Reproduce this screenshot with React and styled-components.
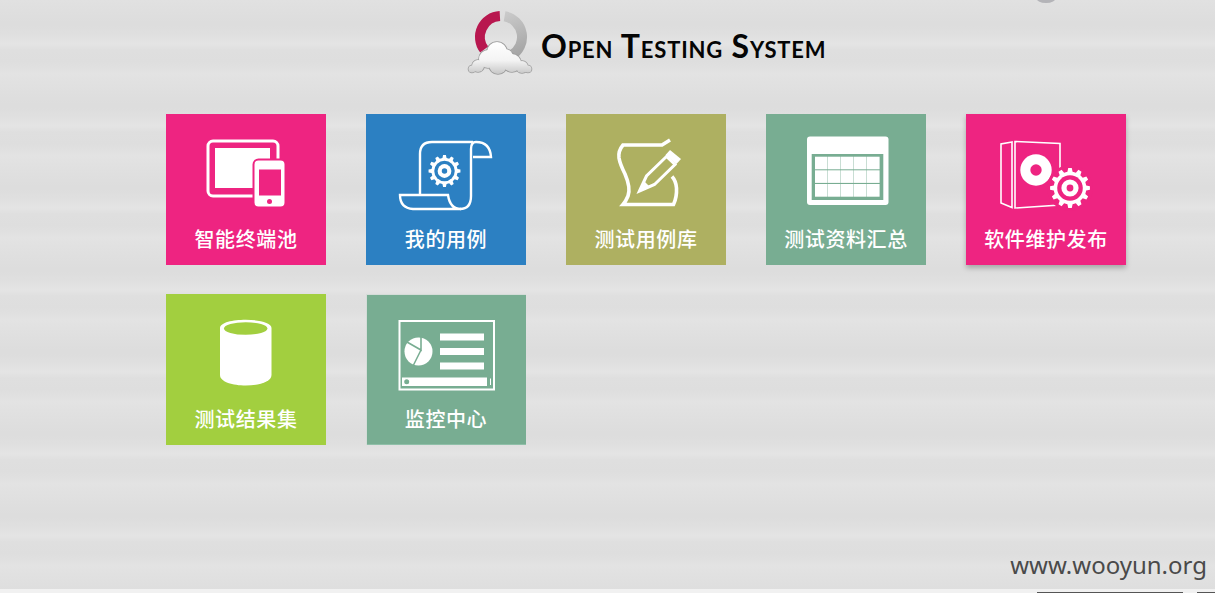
import React from 'react';
import styled, { createGlobalStyle } from 'styled-components';

const GlobalStyle = createGlobalStyle`
    html, body {
        margin: 0;
        padding: 0;
        height: 100%;
        overflow: hidden;
    }
`;

const Page = styled.div`
    position: relative;
    display: flex;
    flex-direction: column;
    height: 593px;
    overflow: hidden;
    font-family: "Noto Sans CJK SC", "Noto Sans", sans-serif;
    background-color: #dfdfdf;
    background-image: repeating-linear-gradient(
        to bottom,
        #e1e1e1 0px,
        #dddddd 22px,
        #dddddd 26px,
        #e0e0e0 36px,
        #e4e4e4 44px,
        #dfdfdf 50px,
        #dedede 62px,
        #e3e3e3 74px,
        #e1e1e1 82px
    );
`;

// the little grey thing peeking in at the top edge
const TopBlob = styled.div`
    position: absolute;
    top: -8px;
    left: 1036px;
    width: 20px;
    height: 11px;
    border-radius: 50%;
    background: #b4b4b8;
`;

const Header = styled.header`
    display: flex;
    align-items: flex-start;
    height: 114px;
    padding: 5px 0 0 466px;
    box-sizing: border-box;
`;

const LogoTitle = styled.h1`
    margin: 21px 0 0 5px;
    font-family: "Lato", "Liberation Sans", sans-serif;
    font-size: 32px;
    line-height: 40px;
    font-weight: 700;
    font-variant: small-caps;
    letter-spacing: 0.8px;
    white-space: nowrap;
    color: #050505;
`;

const Grid = styled.main`
    display: grid;
    grid-template-columns: repeat(5, 160px);
    grid-auto-rows: 151px;
    column-gap: 40px;
    row-gap: 29px;
    padding-left: 166px;
    flex: 1;
`;

const Tile = styled.a`
    display: flex;
    flex-direction: column;
    align-items: center;
    background: ${p => p.$color};
    box-shadow: ${p => p.$edge || 'none'};
    color: #fff;
    cursor: pointer;
`;

const IconBox = styled.svg`
    display: block;
    width: 160px;
    height: 110px;
    flex-shrink: 0;
`;

const Label = styled.span`
    font-size: 20px;
    line-height: 28px;
    margin-top: 1px;
    font-weight: 500;
    letter-spacing: 0.6px;
    white-space: nowrap;
`;

const Watermark = styled.div`
    align-self: flex-end;
    margin: 0 8px 6px 0;
    font-family: "Noto Sans", sans-serif;
    font-size: 24px;
    line-height: 30px;
    color: #4a4a4a;
`;

const BottomBar = styled.div`
    display: flex;
    justify-content: flex-end;
    align-items: flex-end;
    gap: 14px;
    height: 4px;
    margin-top: 3px;
    background: #f1f1f1;
`;

const BarPiece = styled.span`
    display: block;
    width: ${p => p.$width}px;
    height: 1px;
    background: #555;
`;

// builds a toothed outline for the gear icons
const gearPath = (cx, cy, outer, inner, teeth) => {
    const step = (Math.PI * 2) / teeth;
    const points = [];
    for (let i = 0; i < teeth; i++) {
        const a = i * step;
        const offsets = [[-0.3, inner], [-0.17, outer], [0.17, outer], [0.3, inner]];
        offsets.forEach(([o, r]) => {
            const angle = a + o * step;
            points.push(`${(cx + Math.cos(angle) * r).toFixed(2)} ${(cy + Math.sin(angle) * r).toFixed(2)}`);
        });
    }
    return `M${points.join('L')}Z`;
};

const Gear = ({ cx, cy, outer, bg, teeth = 12 }) => (
    <g>
        <path d={gearPath(cx, cy, outer, outer * 0.82, teeth)} fill="#fff" />
        <circle cx={cx} cy={cy} r={outer * 0.64} fill={bg} />
        <circle cx={cx} cy={cy} r={outer * 0.43} fill="#fff" />
        <circle cx={cx} cy={cy} r={outer * 0.17} fill={bg} />
    </g>
);

const DevicesIcon = ({ bg }) => (
    <IconBox viewBox="0 0 160 110">
        <rect x="42" y="27" width="70" height="55" rx="5" fill="none" stroke="#fff" strokeWidth="3" />
        <rect x="49" y="34" width="55" height="40" fill="#fff" />
        <rect x="87.5" y="45.5" width="32" height="48" rx="5" fill="#fff" stroke={bg} strokeWidth="2" />
        <rect x="93" y="55.5" width="22" height="26" fill={bg} />
        <circle cx="103.5" cy="87.5" r="2.5" fill={bg} />
    </IconBox>
);

const ScrollIcon = ({ bg }) => (
    <IconBox viewBox="0 0 160 110">
        <g fill="none" stroke="#fff" strokeWidth="2.4">
            <path d="M107 28H66Q54 28 54 40V81" />
            <path d="M34 81H82Q84 95 95 95H47Q34 94 34 81Z" />
            <path d="M94 95Q105 95 105 82V35Q105 28 110 28Q124 28 125 43H107" />
        </g>
        <Gear cx={78.5} cy={57} outer={16} bg={bg} />
    </IconBox>
);

const NoteIcon = () => (
    <IconBox viewBox="0 0 160 110">
        <path
            d="M104 26L96 31H57Q52 37 53 44Q54 50 59 60Q65 74 62 82Q60 87 57 90.5H107.5Q111 83 110.5 74Q110 67 106 62.5"
            fill="none"
            stroke="#fff"
            strokeWidth="3.6"
        />
        <path d="M73.5 77L80.5 62L100.5 42.5L109 50.5L88.5 70.5Z" fill="none" stroke="#fff" strokeWidth="3" strokeLinejoin="miter" />
        <path d="M73.5 77L78 67L83 72Z" fill="#fff" />
        <path d="M104 36L115 45L110.5 50L99.5 41Z" fill="#fff" />
    </IconBox>
);

const CalendarIcon = ({ bg }) => {
    const cols = [49, 62, 75, 88, 101];
    const rows = [[42.7, 12.6], [56.3, 12.6], [70, 12.7]];
    return (
        <IconBox viewBox="0 0 160 110">
            <rect x="41" y="22.5" width="81.5" height="68.5" rx="3" fill="#fff" />
            <rect x="45.7" y="40" width="71.6" height="46" fill={bg} />
            {rows.map(([y, h]) => cols.map(x => (
                <rect key={`${x}-${y}`} x={x} y={y} width="12.6" height={h} fill="#fff" />
            )))}
        </IconBox>
    );
};

const DiscBoxIcon = ({ bg }) => (
    <IconBox viewBox="0 0 160 110">
        <g fill="none" stroke="#fff" strokeWidth="1.6">
            <path d="M49 27.5L94 29.5V91L49 94Z" />
            <path d="M46 28L35 30V89L46 93.5Z" />
        </g>
        <circle cx="70" cy="56" r="15.7" fill="#fff" />
        <circle cx="70" cy="56" r="5.7" fill={bg} />
        <circle cx="104" cy="74" r="23" fill={bg} />
        <Gear cx={104} cy={74} outer={20} bg={bg} />
    </IconBox>
);

const CylinderIcon = ({ bg }) => (
    <IconBox viewBox="0 0 160 110">
        <path d="M54 34C54 23 105.5 23 105.5 34V81C105.5 95 54 95 54 81Z" fill="#fff" />
        <ellipse cx="79.7" cy="34.5" rx="21.7" ry="6.3" fill={bg} />
    </IconBox>
);

const MonitorIcon = ({ bg }) => (
    <IconBox viewBox="0 0 160 110">
        <rect x="33.5" y="27" width="94.5" height="68.5" fill="none" stroke="#fff" strokeWidth="2" />
        <circle cx="52.5" cy="57.5" r="14" fill="#fff" />
        <g fill="none" stroke={bg} strokeWidth="1.6">
            <path d="M55 42V56L41 48" />
            <path d="M55 56L47 72" />
        </g>
        <rect x="74" y="39.5" width="44" height="7" fill="#fff" />
        <rect x="74" y="54" width="44" height="7" fill="#fff" />
        <rect x="74" y="68.5" width="44" height="7" fill="#fff" />
        <rect x="36" y="83.5" width="85" height="8.5" fill="#fff" />
        <circle cx="40.7" cy="87.8" r="3.2" fill={bg} stroke="#fff" strokeWidth="1.4" />
        <rect x="124" y="84.5" width="1" height="6.5" fill="#fff" />
    </IconBox>
);

const CloudShape = ({ fill, stroke }) => (
    <g fill={fill} stroke={stroke} strokeWidth={stroke ? 1.6 : 0}>
        <circle cx="31" cy="47" r="10" />
        <circle cx="39" cy="52" r="8" />
        <circle cx="22" cy="54" r="9" />
        <circle cx="12" cy="61" r="6" />
        <circle cx="6" cy="64" r="3.5" />
        <circle cx="46" cy="58" r="9" />
        <circle cx="56" cy="62" r="6" />
        <circle cx="62" cy="64" r="3.5" />
        <circle cx="32" cy="60" r="9" />
    </g>
);

const Logo = () => (
    <svg width="70" height="72" viewBox="0 0 70 72">
        <defs>
            <linearGradient id="cloudFill" x1="0" y1="37" x2="0" y2="70" gradientUnits="userSpaceOnUse">
                <stop offset="0" stopColor="#ffffff" />
                <stop offset="0.55" stopColor="#f4f4f4" />
                <stop offset="1" stopColor="#c4c4c4" />
            </linearGradient>
            <linearGradient id="ringGrey" x1="38" y1="10" x2="55" y2="50" gradientUnits="userSpaceOnUse">
                <stop offset="0" stopColor="#c9c9c9" />
                <stop offset="1" stopColor="#a4a4a4" />
            </linearGradient>
        </defs>
        <path d="M33.9 11A21 21 0 0 0 18.2 44.6" fill="none" stroke="#b8174f" strokeWidth="10" />
        <path d="M38.6 11.3A21 21 0 0 1 45.5 50.2" fill="none" stroke="url(#ringGrey)" strokeWidth="10" />
        <CloudShape fill="#9c9c9c" stroke="#9c9c9c" />
        <CloudShape fill="url(#cloudFill)" />
    </svg>
);

const PINK = '#ee2481';
const BLUE = '#2c80c2';
const OLIVE = '#aeb061';
const SAGE = '#78ad92';
const LIME = '#a2cf3f';

const tiles = [
    { label: '智能终端池', color: PINK, Icon: DevicesIcon },
    { label: '我的用例', color: BLUE, Icon: ScrollIcon },
    { label: '测试用例库', color: OLIVE, Icon: NoteIcon },
    { label: '测试资料汇总', color: SAGE, Icon: CalendarIcon },
    { label: '软件维护发布', color: PINK, Icon: DiscBoxIcon, edge: '0 3px 5px rgba(0, 0, 0, 0.25)' },
    { label: '测试结果集', color: LIME, Icon: CylinderIcon },
    { label: '监控中心', color: SAGE, Icon: MonitorIcon, edge: 'inset 1px 1px 0 #d4dcd8, inset 0 -1px 0 #8fbfa8' },
];

const App = () => (
    <Page>
        <GlobalStyle />
        <TopBlob />
        <Header>
            <Logo />
            <LogoTitle>Open Testing System</LogoTitle>
        </Header>
        <Grid>
            {tiles.map(({ label, color, Icon, edge }) => (
                <Tile key={label} $color={color} $edge={edge}>
                    <Icon bg={color} />
                    <Label>{label}</Label>
                </Tile>
            ))}
        </Grid>
        <Watermark>www.wooyun.org</Watermark>
        <BottomBar>
            <BarPiece $width={146} />
            <BarPiece $width={18} />
        </BottomBar>
    </Page>
);

export default App;
